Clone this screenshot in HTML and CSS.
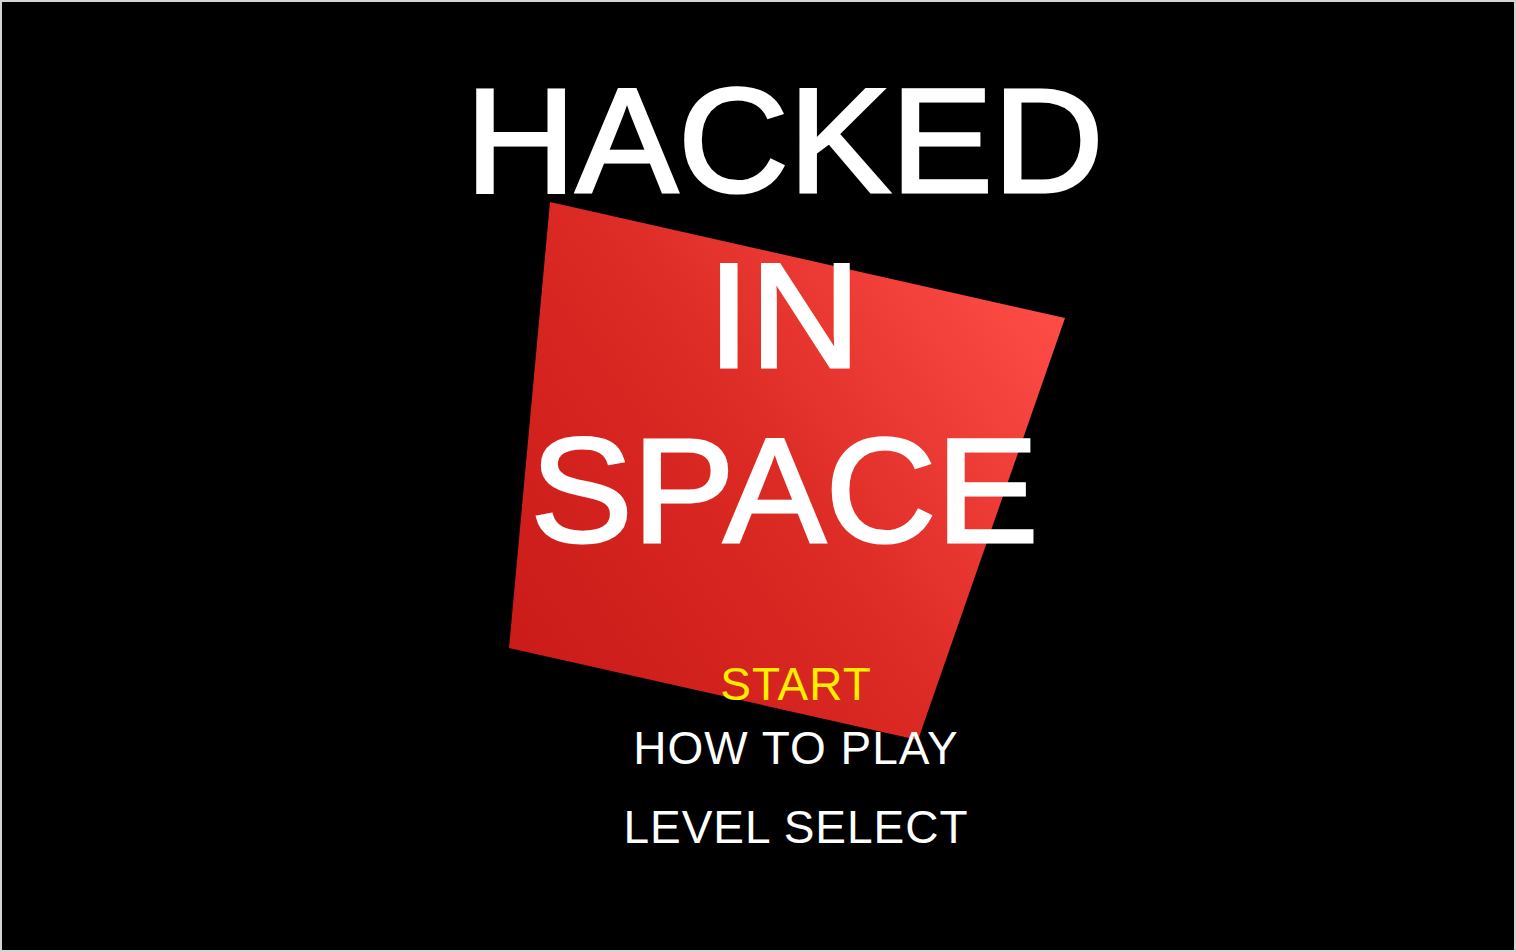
FILE: index.html
```html
<!DOCTYPE html>
<html lang="en">
<head>
<meta charset="utf-8">
<title>Hacked in Space</title>
<link rel="stylesheet" href="styles.css">
</head>
<body>
<div class="screen">
  <svg class="card" width="1512" height="948" viewBox="2 2 1512 948" aria-hidden="true">
    <defs>
      <linearGradient id="redgrad" gradientUnits="userSpaceOnUse" x1="509" y1="690" x2="1065" y2="300">
        <stop offset="0" stop-color="#c91a18"/>
        <stop offset="0.5" stop-color="#dc2a24"/>
        <stop offset="1" stop-color="#ff4e47"/>
      </linearGradient>
    </defs>
    <polygon points="550,202 1065,318 918,740 509,648" fill="url(#redgrad)"/>
  </svg>
  <h1 class="title">
    <span class="title-line">HACKED</span>
    <span class="title-line">IN</span>
    <span class="title-line">SPACE</span>
  </h1>
  <nav class="menu">
    <div class="menu-item active">START</div>
    <div class="menu-item how">HOW TO PLAY</div>
    <div class="menu-item level">LEVEL SELECT</div>
  </nav>
</div>
</body>
</html>
```
FILE: styles.css
```css
html, body {
  margin: 0;
  padding: 0;
  background: #000;
}

.screen {
  position: relative;
  box-sizing: border-box;
  width: 1516px;
  height: 952px;
  border: 2px solid #d4d4d4;
  background: #000;
  overflow: hidden;
  font-family: "Liberation Sans", Arial, sans-serif;
  color: #fff;
  display: flex;
  flex-direction: column;
  align-items: center;
}

.card {
  position: absolute;
  left: 0;
  top: 0;
  z-index: 0;
}

.title {
  position: relative;
  z-index: 1;
  margin: 0;
  padding: 51px 0 0 52px;
  font-size: 148px;
  font-weight: normal;
  line-height: 175px;
  display: flex;
  flex-direction: column;
  align-items: center;
  -webkit-text-stroke: 3px #fff;
}

.title-line {
  display: block;
  white-space: nowrap;
  transform: scaleX(1.035);
}

.menu {
  position: relative;
  z-index: 1;
  margin-top: 81px;
  padding-left: 76px;
  display: flex;
  flex-direction: column;
  align-items: center;
  font-size: 46px;
  line-height: 50px;
  letter-spacing: 1px;
}

.menu-item {
  white-space: nowrap;
}

.menu-item.active {
  color: #ffee00;
}

.menu-item.how {
  margin-top: 14px;
}

.menu-item.level {
  margin-top: 29px;
}
```
